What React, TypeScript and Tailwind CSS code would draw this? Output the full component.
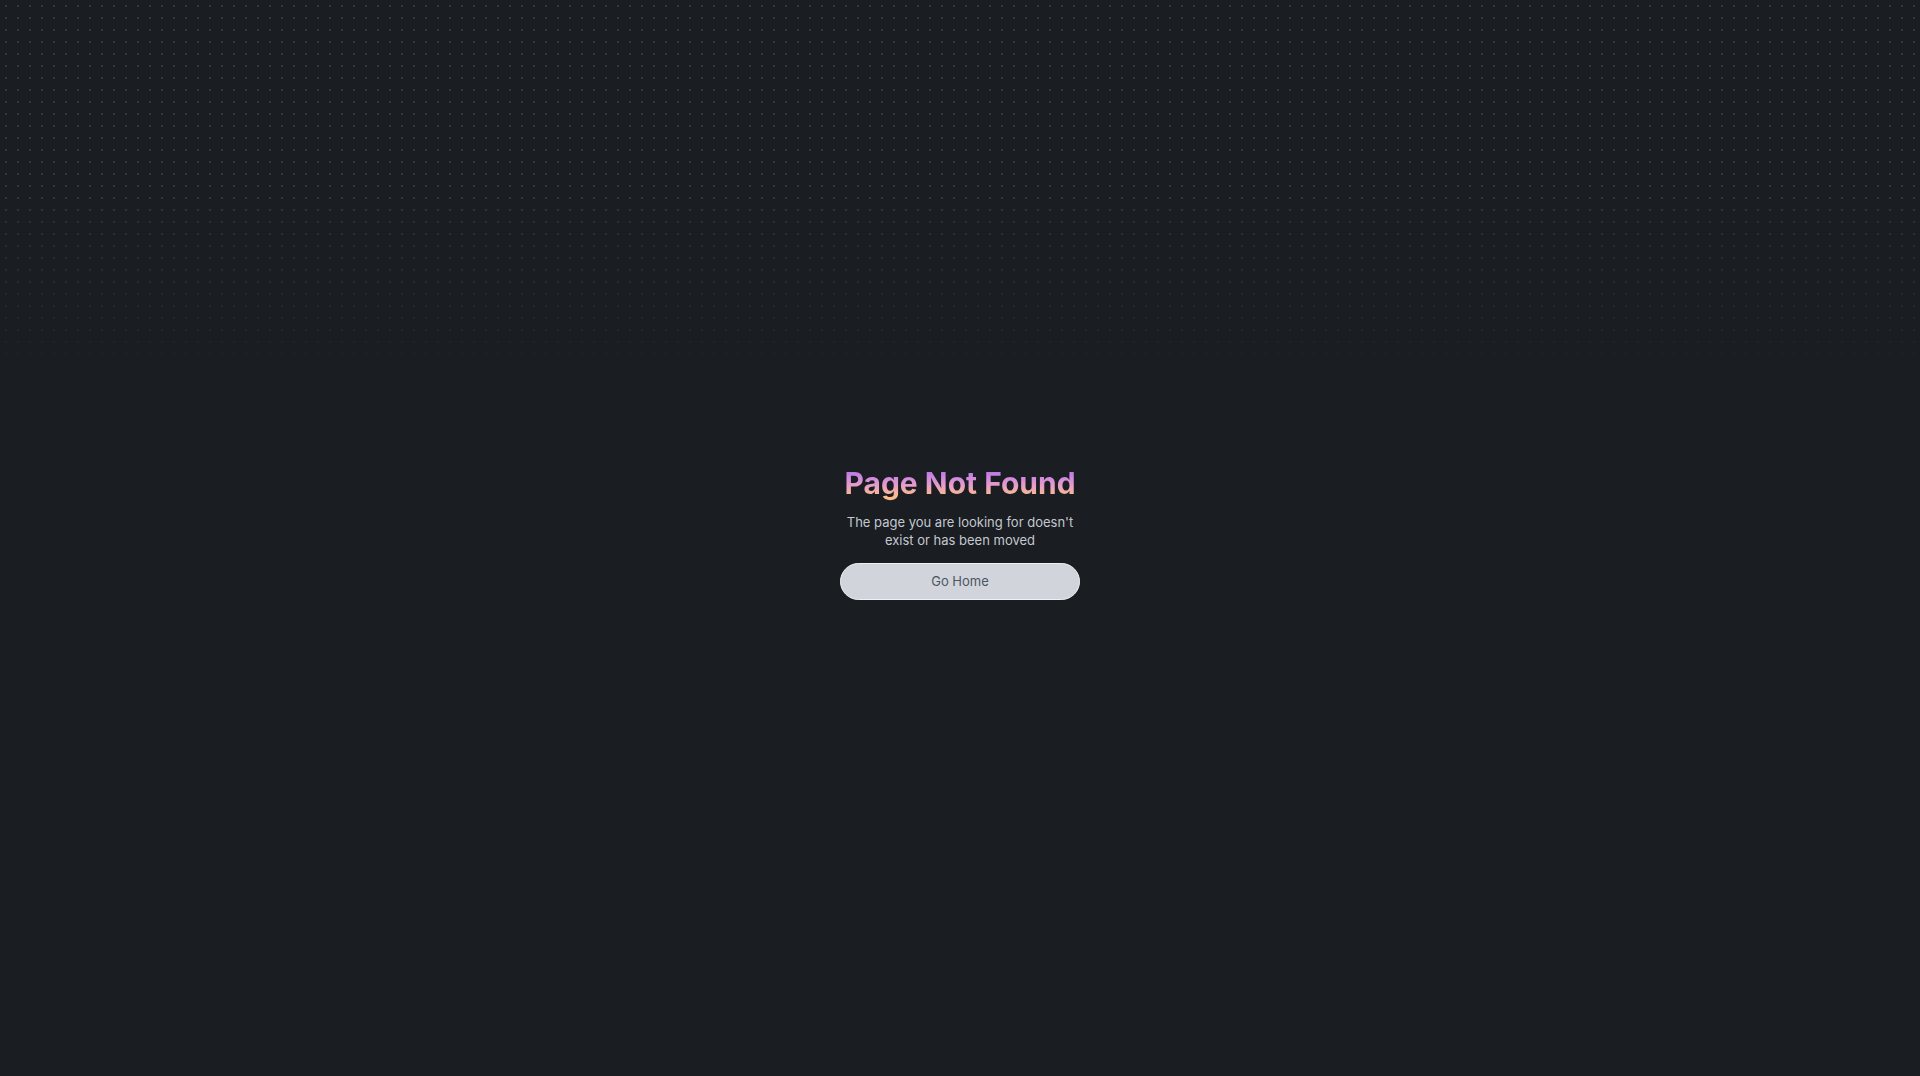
import React from "react";

const NotFoundPage = () => {
  return (
    <div className="relative flex min-h-screen items-center justify-center overflow-hidden bg-[#1a1d22] font-['Inter',sans-serif]">
      <div className="pointer-events-none absolute inset-x-0 top-0 h-[440px] bg-[radial-gradient(#34383f_1px,transparent_1.3px)] bg-[size:12px_12px] [mask-image:linear-gradient(to_bottom,black_0px,black_170px,transparent_400px)]" />
      <div className="relative flex w-60 flex-col items-center pb-[11px] text-center">
        <h1 className="bg-linear-to-b from-[#bf78e8] from-20% via-[#e49ccb] via-55% to-[#fcb98a] to-85% bg-clip-text text-3xl font-bold text-transparent">
          Page Not Found
        </h1>
        <p className="mt-3 text-[13px] leading-[18px] text-[#c4c8cf]">
          The page you are looking for doesn't exist or has been moved
        </p>
        <button
          type="button"
          className="mt-[14px] h-[37px] w-full rounded-full border border-[#eef0f3] bg-[#d1d5db] text-[13px] text-[#4b5563]"
        >
          Go Home
        </button>
      </div>
    </div>
  );
};

export default function App() {
  return <NotFoundPage />;
}
